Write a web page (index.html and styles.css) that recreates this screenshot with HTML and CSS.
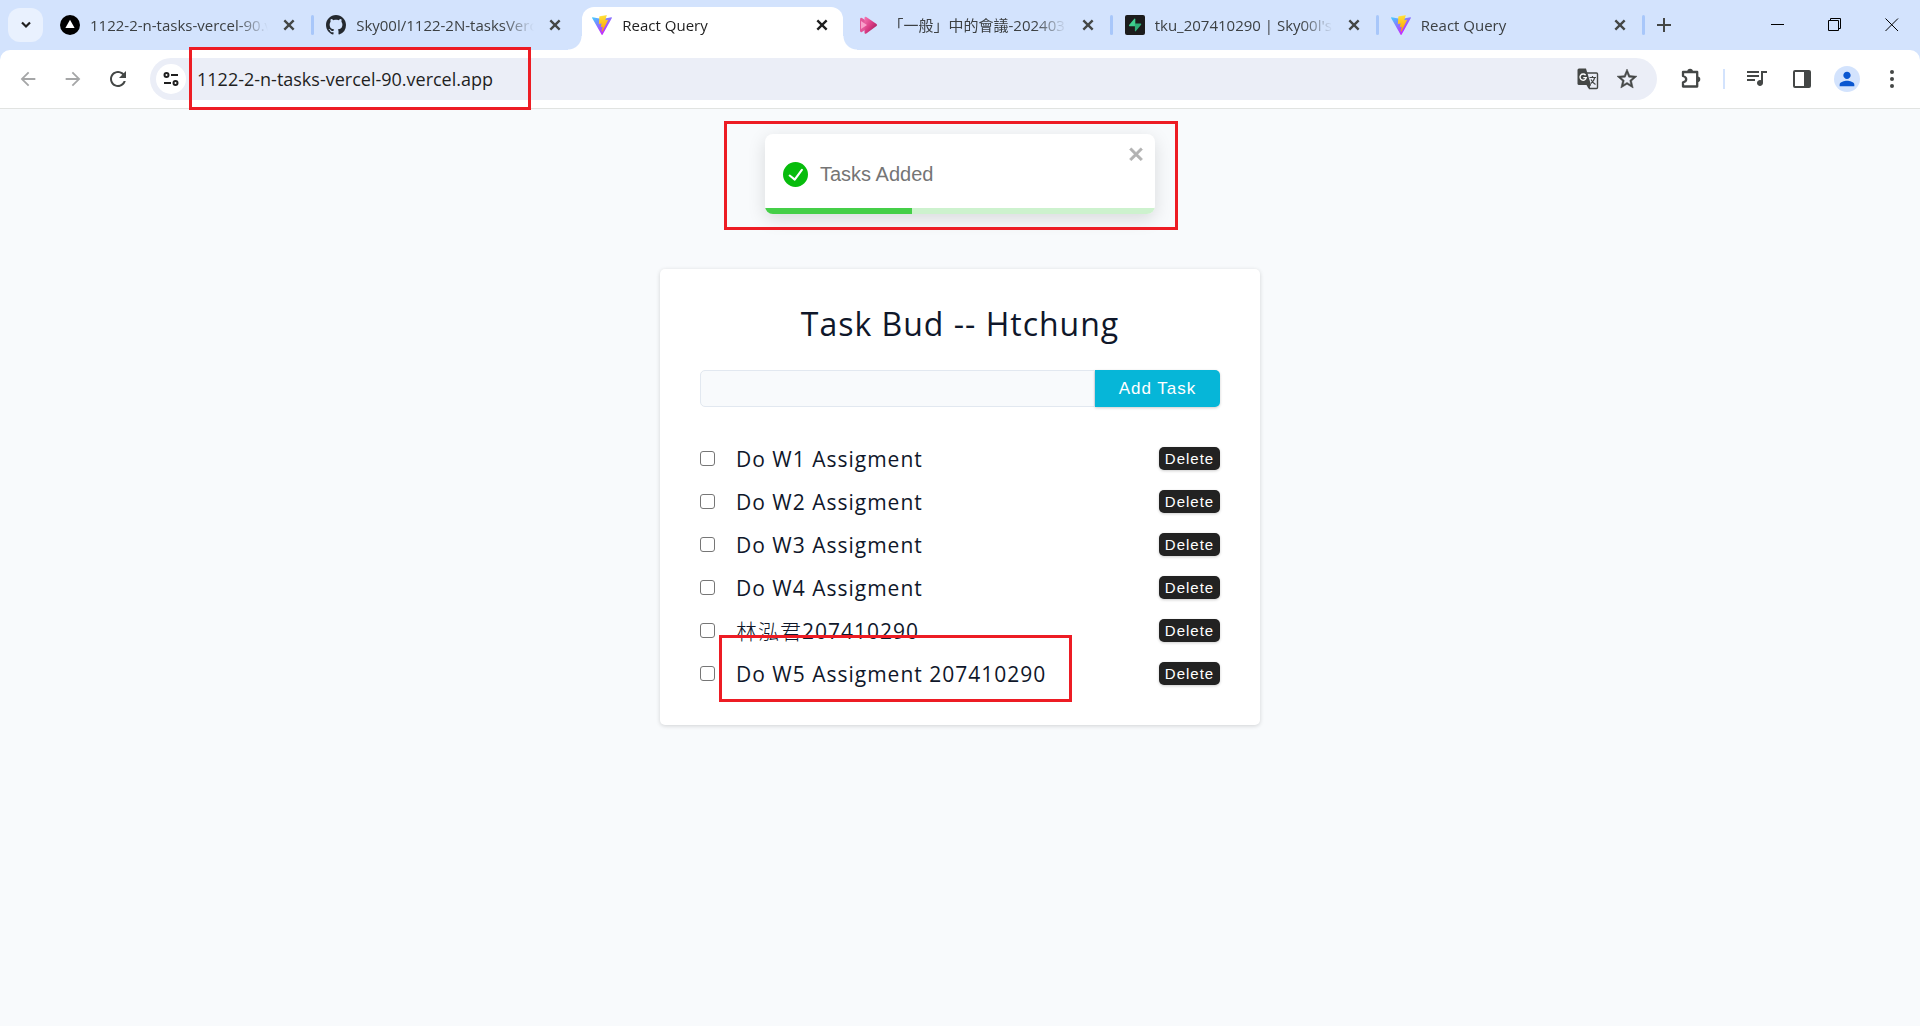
FILE: index.html
```html
<!DOCTYPE html>
<html lang="zh-Hant">
<head>
<meta charset="utf-8">
<meta name="viewport" content="width=device-width, initial-scale=1">
<title>React Query</title>
<link rel="stylesheet" href="styles.css">
</head>
<body>
<svg class="sprite" aria-hidden="true">
  <defs>
    <linearGradient id="vite-blue" x1="0" x2=".58" y1="0" y2=".8"><stop offset="0" stop-color="#41d1ff"/><stop offset="1" stop-color="#bd34fe"/></linearGradient>
    <linearGradient id="vite-bolt" x1=".43" x2=".5" y1=".02" y2=".89"><stop offset="0" stop-color="#ffea83"/><stop offset=".08" stop-color="#ffdd35"/><stop offset="1" stop-color="#ffa800"/></linearGradient>
    <linearGradient id="stream-front" x1="0" x2="1" y1="0" y2="1"><stop offset="0" stop-color="#f778b4"/><stop offset=".5" stop-color="#d83a83"/><stop offset="1" stop-color="#8a1650"/></linearGradient>
    <symbol id="vite" viewBox="0 0 256 257">
      <path fill="url(#vite-blue)" d="M255.153 37.938L134.897 252.976c-2.483 4.44-8.862 4.466-11.382.048L.875 37.958c-2.746-4.814 1.371-10.646 6.827-9.67l120.385 21.517a6.537 6.537 0 0 0 2.322-.004l117.867-21.483c5.438-.991 9.574 4.796 6.877 9.62Z"/>
      <path fill="url(#vite-bolt)" d="M185.432.063L96.44 17.501a3.268 3.268 0 0 0-2.634 3.014l-5.474 92.456a3.268 3.268 0 0 0 3.997 3.378l24.777-5.718c2.318-.535 4.413 1.507 3.936 3.838l-7.361 36.047c-.495 2.426 1.782 4.5 4.151 3.78l15.304-4.649c2.372-.72 4.652 1.36 4.15 3.788l-11.698 56.621c-.732 3.542 3.979 5.473 5.943 2.437l1.313-2.028l72.516-144.72c1.215-2.423-.88-5.186-3.54-4.672l-25.505 4.922c-2.396.462-4.435-1.77-3.759-4.114l16.646-57.705c.677-2.35-1.37-4.583-3.769-4.113Z"/>
    </symbol>
    <symbol id="cross" viewBox="0 0 12 12"><path d="M2 2l8 8M10 2l-8 8" fill="none" stroke="currentColor" stroke-width="2"/></symbol>
  </defs>
</svg>

<header class="browser">
  <div class="tabstrip">
    <button class="tab-search" aria-label="Search tabs"><svg width="12" height="8" viewBox="0 0 12 8"><path d="M2 1.500l4 4 4-4" fill="none" stroke="#1f1f1f" stroke-width="2.200"/></svg></button>
    <nav class="tabs" aria-label="Tabs">
      <div class="tab">
        <svg class="favicon" viewBox="0 0 20 20"><circle cx="10" cy="10" r="10"/><path d="M10 4.800l4.600 8.200H5.400z" fill="#fff"/></svg>
        <a class="tab-title" href="#">1122-2-n-tasks-vercel-90.vercel.app</a>
        <button class="tab-close" aria-label="Close tab"><svg class="x"><use href="#cross"/></svg></button>
      </div>
      <div class="tab">
        <svg class="favicon" viewBox="0 0 16 16"><path fill="#24292f" d="M8 0C3.580 0 0 3.580 0 8c0 3.540 2.290 6.530 5.470 7.590.4.070.55-.17.55-.38 0-.19-.01-.82-.01-1.490-2.010.37-2.530-.49-2.690-.94-.09-.23-.48-.94-.82-1.130-.28-.15-.68-.52-.01-.53.63-.01 1.080.58 1.230.82.72 1.210 1.870.87 2.330.66.07-.52.28-.87.51-1.070-1.780-.2-3.640-.89-3.640-3.950 0-.87.31-1.590.82-2.150-.08-.2-.36-1.020.08-2.120 0 0 .67-.21 2.200.82.64-.18 1.320-.27 2-.27s1.360.09 2 .27c1.530-1.040 2.200-.82 2.200-.82.44 1.100.16 1.920.08 2.120.51.56.82 1.270.82 2.150 0 3.070-1.870 3.750-3.650 3.950.29.25.54.73.54 1.480 0 1.070-.01 1.930-.01 2.200 0 .21.15.46.55.38A8.010 8.010 0 0 0 16 8c0-4.420-3.580-8-8-8z"/></svg>
        <a class="tab-title" href="#">Sky00l/1122-2N-tasksVercel-90</a>
        <button class="tab-close" aria-label="Close tab"><svg class="x"><use href="#cross"/></svg></button>
      </div>
      <div class="tab active">
        <svg class="favicon"><use href="#vite"/></svg>
        <a class="tab-title" href="#" aria-current="page">React Query</a>
        <button class="tab-close" aria-label="Close tab"><svg class="x"><use href="#cross"/></svg></button>
      </div>
      <div class="tab">
        <svg class="favicon" viewBox="0 0 20 20"><path d="M1 4.500Q1 2 3 3l6 4v6l-6 4q-2 1-2-1.500z" fill="#e2579a"/><path d="M5.500 3q0-1.800 1.800-1L17.500 9q1.200 1 0 2L7.300 18.500q-1.800 1-1.800-1z" fill="url(#stream-front)"/><path d="M2 6l6 4-6 4z" fill="#f9a0cb"/></svg>
        <a class="tab-title" href="#">「一般」中的會議-20240318</a>
        <button class="tab-close" aria-label="Close tab"><svg class="x"><use href="#cross"/></svg></button>
      </div>
      <div class="tab">
        <svg class="favicon" viewBox="0 0 20 20"><rect width="20" height="20" rx="2" fill="#1c1c1c"/><path d="M10.300 4v7.200H4.500q-1-.2-.4-1.100l5.200-6.300q.8-.7 1 .2z" fill="#3ecf8e"/><path d="M9.900 16V8.500h5.800q1 .3.400 1.200l-5.200 6.400q-.8.700-1-.1z" fill="#2fae76"/></svg>
        <a class="tab-title" href="#">tku_207410290 | Sky00l's Org</a>
        <button class="tab-close" aria-label="Close tab"><svg class="x"><use href="#cross"/></svg></button>
      </div>
      <div class="tab">
        <svg class="favicon"><use href="#vite"/></svg>
        <a class="tab-title" href="#">React Query</a>
        <button class="tab-close" aria-label="Close tab"><svg class="x"><use href="#cross"/></svg></button>
      </div>
    </nav>
    <button class="new-tab" aria-label="New tab"><svg width="14" height="14" viewBox="0 0 14 14"><path d="M7 0v14M0 7h14" stroke="#444746" stroke-width="2"/></svg></button>
    <div class="window-controls">
      <button aria-label="Minimize"><svg width="14" height="14" viewBox="0 0 14 14"><path d="M0 6.500h13" stroke="#000"/></svg></button>
      <button aria-label="Restore"><svg width="14" height="14" viewBox="0 0 14 14"><path d="M.5 2.500h10v10H.5zM2.500 2.500v-2h10v10h-2" fill="none" stroke="#000"/></svg></button>
      <button aria-label="Close"><svg width="14" height="14" viewBox="0 0 14 14"><path d="M.5.5l12.500 12.500M13 .5L.5 13" stroke="#000"/></svg></button>
    </div>
  </div>

  <div class="toolbar">
    <div class="nav-buttons">
      <button class="muted" aria-label="Back"><svg width="22" height="22" viewBox="0 0 24 24"><path fill="currentColor" d="M20 11H7.830l5.590-5.590L12 4l-8 8 8 8 1.410-1.410L7.830 13H20z"/></svg></button>
      <button class="muted" aria-label="Forward"><svg width="22" height="22" viewBox="0 0 24 24"><path fill="currentColor" d="M4 11h12.170l-5.590-5.590L12 4l8 8-8 8-1.410-1.410L16.170 13H4z"/></svg></button>
      <button aria-label="Reload"><svg width="24" height="24" viewBox="0 0 24 24"><path fill="currentColor" d="M17.650 6.350C16.200 4.900 14.210 4 12 4c-4.420 0-7.990 3.580-7.990 8s3.570 8 7.990 8c3.730 0 6.840-2.550 7.730-6h-2.080c-.82 2.330-3.040 4-5.650 4-3.310 0-6-2.690-6-6s2.690-6 6-6c1.660 0 3.140.69 4.220 1.780L13 11h7V4z"/></svg></button>
    </div>
    <div class="omnibox">
      <button class="site-info" aria-label="Site information"><svg width="18" height="18" viewBox="0 0 18 18" fill="none" stroke="#1f1f1f" stroke-width="2"><circle cx="4.500" cy="5" r="2"/><path d="M9 5h7M2 13h7"/><circle cx="13.500" cy="13" r="2"/></svg></button>
      <input class="url" type="text" aria-label="Address" value="1122-2-n-tasks-vercel-90.vercel.app">
      <button aria-label="Translate"><svg width="22" height="22" viewBox="0 0 22 22"><path d="M9 5h10.500q1 0 1 1v13.500q0 1-1 1H12.500L9 5z" fill="none" stroke="#444746" stroke-width="1.400"/><path d="M2 .5h7l5 16.500H2Q.5 17 .5 15.500V2Q.5.5 2 .5z" fill="#444746"/><path d="M9.500 17h4.500l-2.500 3.500z" fill="#444746"/><path d="M8.600 7.200A3.100 3.100 0 1 0 9.200 9.600H6.300" fill="none" stroke="#fff" stroke-width="1.400"/><path d="M12.500 9.500h6.500M15.500 8v1.500M17.800 9.500q-1 4-4 6M14 11.500q1.500 3 4.500 5" fill="none" stroke="#444746" stroke-width="1.200"/></svg></button>
      <button aria-label="Bookmark"><svg width="24" height="24" viewBox="0 0 24 24"><path fill="currentColor" stroke="currentColor" stroke-width=".5" d="M22 9.240l-7.190-.62L12 2 9.190 8.630 2 9.240l5.460 4.730L5.820 21 12 17.270 18.180 21l-1.630-7.030zM12 15.400l-3.760 2.270 1-4.280-3.320-2.880 4.380-.38L12 6.100l1.710 4.040 4.380.38-3.320 2.880 1 4.280z"/></svg></button>
      <span class="mark mark-url"></span>
    </div>
    <div class="actions">
      <button aria-label="Extensions"><svg width="24" height="24" viewBox="0 0 24 24"><path d="M4 5h14.200v14.500H4v-4.200q3.200-.8 3.200-3.100T4 9z" fill="none" stroke="#444746" stroke-width="2.300" stroke-linejoin="round"/><path d="M8.300 4.500a2.800 2.800 0 0 1 5.600 0zM18.500 9.500a2.800 2.800 0 0 1 0 5.600z" fill="#444746"/></svg></button>
      <span class="divider"></span>
      <button aria-label="Media"><svg width="24" height="24" viewBox="0 0 24 24"><path fill="currentColor" d="M14 4H2v2h12zm0 4H2v2h12zM2 14h8v-2H2zM16 4v9.180c-.31-.11-.65-.18-1-.18-1.660 0-3 1.340-3 3s1.340 3 3 3 3-1.340 3-3V6h4V4z"/></svg></button>
      <button aria-label="Side panel"><svg width="18" height="18" viewBox="0 0 18 18"><rect x="1" y="1" width="16" height="16" rx="1" fill="none" stroke="#444746" stroke-width="2"/><path d="M11 1h6v16h-6z" fill="#444746"/></svg></button>
      <button class="profile" aria-label="Profile"><svg width="22" height="22" viewBox="0 0 24 24"><path fill="#0b57d0" d="M12 12c2.210 0 4-1.790 4-4s-1.790-4-4-4-4 1.790-4 4 1.790 4 4 4zm0 2c-2.670 0-8 1.340-8 4v2h16v-2c0-2.660-5.330-4-8-4z"/></svg></button>
      <button aria-label="Menu"><svg width="4" height="18" viewBox="0 0 4 18" fill="#444746"><circle cx="2" cy="2" r="2"/><circle cx="2" cy="9" r="2"/><circle cx="2" cy="16" r="2"/></svg></button>
    </div>
  </div>
</header>

<main class="page">
  <div class="toast" role="status">
    <svg class="toast-icon" viewBox="0 0 24 24"><path fill="#07bc0c" d="M12 0a12 12 0 1 0 12 12A12.014 12.014 0 0 0 12 0zm6.927 8.200l-6.845 9.289a1.011 1.011 0 0 1-1.430.188l-4.888-3.908a1 1 0 1 1 1.250-1.562l4.076 3.261 6.227-8.451a1 1 0 1 1 1.610 1.183z"/></svg>
    <span>Tasks Added</span>
    <button class="toast-close" aria-label="close"><svg width="18" height="20" viewBox="0 0 14 16"><path fill="#b2b2b2" stroke="#b2b2b2" stroke-width=".4" fill-rule="evenodd" d="M7.710 8.230l3.750 3.750-1.480 1.480-3.750-3.750-3.750 3.750L1 11.980l3.750-3.750L1 4.480 2.480 3l3.750 3.750L9.980 3l1.480 1.480z"/></svg></button>
    <div class="toast-track"><div class="toast-bar" style="width:37.7%"></div></div>
    <span class="mark mark-toast"></span>
  </div>

  <section class="card">
    <form class="task-form">
      <h1>Task Bud -- Htchung</h1>
      <div class="form-row">
        <input type="text" class="task-input" aria-label="New task">
        <button type="button" class="add">Add Task</button>
      </div>
    </form>
    <ul class="items">
      <li><input type="checkbox" id="t1"><label for="t1">Do W1 Assigment</label><button class="delete">Delete</button></li>
      <li><input type="checkbox" id="t2"><label for="t2">Do W2 Assigment</label><button class="delete">Delete</button></li>
      <li><input type="checkbox" id="t3"><label for="t3">Do W3 Assigment</label><button class="delete">Delete</button></li>
      <li><input type="checkbox" id="t4"><label for="t4">Do W4 Assigment</label><button class="delete">Delete</button></li>
      <li><input type="checkbox" id="t5"><label for="t5"><span class="han">林泓君</span>207410290</label><button class="delete">Delete</button></li>
      <li><input type="checkbox" id="t6"><label for="t6">Do W5 Assigment 207410290</label><button class="delete">Delete</button><span class="mark mark-item"></span></li>
    </ul>
  </section>
</main>
</body>
</html>
```
FILE: styles.css
```css
:root {
  --ui: "Open Sans", "Noto Sans CJK TC", sans-serif;
  --frame: #d3e3fd;
  --icon: #444746;
  --ink: #0f172a;
}

* { box-sizing: border-box; }

body {
  margin: 0;
  min-height: 100vh;
  background: #f8fafc;
  color: var(--ink);
  font-family: var(--ui);
}

button {
  display: flex;
  align-items: center;
  justify-content: center;
  padding: 0;
  border: 0;
  background: none;
  color: var(--icon);
  font: inherit;
}

svg { display: block; flex: none; }
.sprite { position: absolute; width: 0; height: 0; }

/* Highlight frames */
.mark {
  position: absolute;
  z-index: 5;
  border: 3px solid #ed1c24;
  pointer-events: none;
}

/* Tab strip */
.browser { background: var(--frame); }

.tabstrip {
  display: flex;
  height: 50px;
  padding-left: 8px;
}

.tab-search {
  flex: none;
  width: 35px;
  height: 34px;
  margin: 8px 7px 0 0;
  border-radius: 12px;
  background: #e9f1fe;
}

.tabs { display: flex; flex: 0 1 1597px; min-width: 0; }

.tab {
  position: relative;
  display: flex;
  flex: 1 1 0;
  align-items: center;
  min-width: 0;
  height: 43px;
  margin: 7px 6px 0 0;
  padding: 0 13px 7px 10px;
}

.tab::after {
  content: "";
  width: 3px;
  height: 20px;
  position: absolute;
  right: -4px;
  top: 8px;
  border-radius: 2px;
  background: #a8c7fa;
}

.favicon { width: 20px; height: 20px; }

.tab-title {
  flex: 1;
  min-width: 0;
  margin: 0 13px 0 10px;
  overflow: hidden;
  color: #3c4043;
  font-size: 15px;
  line-height: 24px;
  text-decoration: none;
  white-space: nowrap;
  -webkit-mask-image: linear-gradient(to left, transparent, #000 32px);
  mask-image: linear-gradient(to left, transparent, #000 32px);
}

.tab-close { flex: none; width: 16px; height: 16px; }
.x { width: 14px; height: 14px; }

.tab.active { border-radius: 12px 12px 0 0; background: #fff; }
.tab.active .tab-title, .tab.active .tab-close { color: #1f1f1f; }
.tab.active::after, .tab:has(+ .active)::after {
  top: auto;
  bottom: 0;
  right: -14px;
  width: 14px;
  height: 14px;
  border-radius: 0;
  background: radial-gradient(circle at 100% 0, transparent 13px, #fff 14px);
}
.tab:has(+ .active)::after {
  right: -6px;
  background: radial-gradient(circle at 0 0, transparent 13px, #fff 14px);
}

.new-tab { flex: none; width: 34px; }

.window-controls { display: flex; margin-left: auto; }
.window-controls button { width: 57px; }

/* Toolbar */
.toolbar {
  display: flex;
  align-items: center;
  height: 59px;
  border-bottom: 1px solid #e1e3e1;
  border-radius: 10px 10px 0 0;
  background: #fff;
}

.nav-buttons { display: flex; padding: 0 10px 0 5px; }
.nav-buttons button { width: 45px; height: 40px; }
.muted { color: #a5a6a7; }

.omnibox {
  position: relative;
  display: flex;
  flex: 1;
  align-items: center;
  gap: 16px;
  min-width: 0;
  height: 42px;
  padding: 0 18px 0 6px;
  border-radius: 21px;
  background: #ebeef7;
}

.site-info { flex: none; width: 30px; height: 30px; border-radius: 50%; background: #fff; }

.url {
  flex: 1;
  min-width: 0;
  margin-left: -5px;
  padding: 0;
  border: 0;
  outline: 0;
  background: none;
  color: #1f1f1f;
  font: 400 18px/26px var(--ui);
}

.mark-url { left: 39px; top: -11px; width: 342px; height: 63px; }

.actions { display: flex; align-items: center; padding: 0 10px 0 16px; }
.actions button { width: 36px; height: 36px; }
.divider { width: 2px; height: 20px; margin: 0 14px; background: var(--frame); }
.actions button + button { margin-left: 9px; }
.actions .profile {
  width: 26px;
  height: 26px;
  border-radius: 50%;
  background: var(--frame);
}
.actions .profile, .actions .profile + button { margin-left: 14px; }

/* Task page */
.page { position: relative; padding: 160px 20px 40px; }

.toast {
  position: absolute;
  top: 25px;
  left: calc(50% - 195px);
  display: flex;
  align-items: center;
  gap: 12px;
  width: 390px;
  height: 80px;
  padding: 0 18px;
  border-radius: 8px;
  background: #fff;
  box-shadow: 0 5px 18px rgba(0, 0, 0, .13);
  color: #757575;
  font: 400 20px/28px "Liberation Sans", Arial, sans-serif;
}

.toast-icon { width: 25px; height: 25px; }
.toast-close { position: absolute; top: 10px; right: 9px; }

.toast-track {
  position: absolute;
  inset: auto 0 0;
  height: 80px;
  border-radius: 8px;
  overflow: hidden;
  pointer-events: none;
  background: linear-gradient(#cdf2ce, #cdf2ce) bottom / 100% 6px no-repeat;
}
.toast-bar { height: 6px; margin-top: 74px; background: #45cf48; }

.mark-toast { inset: -13px -23px -16px -41px; }

.card {
  max-width: 600px;
  margin: 0 auto;
  padding: 31px 0 30px;
  border-radius: 5px;
  background: #fff;
  box-shadow: 0 1px 4px rgba(0, 0, 0, .16);
  letter-spacing: 1px;
}

.task-form { padding: 0 40px; }

h1 {
  margin: 0 0 22px;
  font-size: 32px;
  font-weight: 400;
  line-height: 48px;
  text-align: center;
}

.form-row { display: flex; height: 37px; }

.task-input {
  flex: 1;
  min-width: 0;
  padding: 6px 12px;
  border: 1px solid #e2e8f0;
  border-radius: 5px 0 0 5px;
  outline: 0;
  background: #f8fafc;
  font: inherit;
}

.add, .delete {
  color: #fff;
  font-family: "Liberation Sans", Arial, sans-serif;
  font-weight: 400;
  letter-spacing: 1px;
  box-shadow: 0 1px 3px rgba(0, 0, 0, .2);
}

.add {
  width: 125px;
  border-radius: 0 5px 5px 0;
  background: #06b6d8;
  font-size: 17px;
}

.items { margin: 30px 0 0; padding: 0 40px; list-style: none; }

.items li {
  position: relative;
  display: grid;
  grid-template-columns: auto 1fr auto;
  align-items: center;
  column-gap: 21px;
  height: 43px;
  font-size: 21px;
  line-height: 28px;
}

.han { font-weight: 300; }

.items input {
  appearance: none;
  width: 15px;
  height: 15px;
  margin: 0;
  border: 1px solid #767676;
  border-radius: 3px;
  background: #fff;
}

.delete {
  width: 61px;
  height: 23px;
  border-radius: 5px;
  background: #222;
  font-size: 15px;
}

.mark-item { left: 19px; top: -17px; width: 353px; height: 67px; }
```
